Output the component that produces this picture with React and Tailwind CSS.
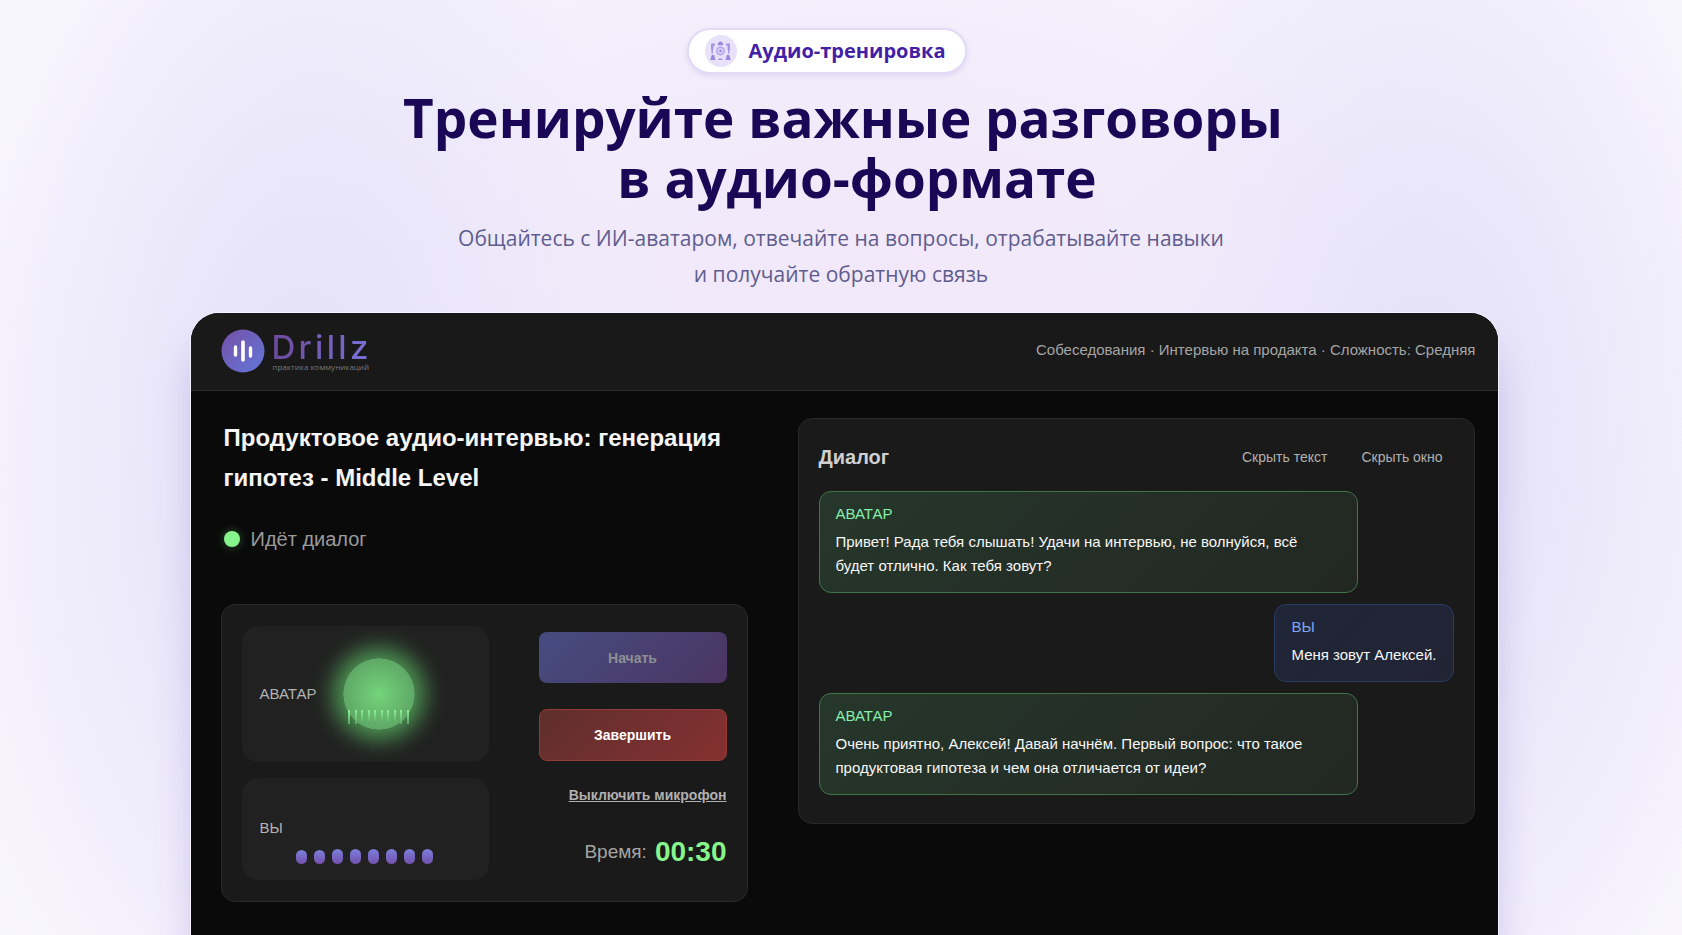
import React, { useState } from "react";

const initialMessages = [
    {
        id: 1,
        from: "avatar",
        text: "Привет! Рада тебя слышать! Удачи на интервью, не волнуйся, всё будет отлично. Как тебя зовут?",
    },
    { id: 2, from: "user", text: "Меня зовут Алексей." },
    {
        id: 3,
        from: "avatar",
        text: "Очень приятно, Алексей! Давай начнём. Первый вопрос: что такое продуктовая гипотеза и чем она отличается от идеи?",
    },
];

const micLevels = [14, 14, 15, 15, 15, 15, 15, 15];
const voiceTicks = [0, 1, 2, 3, 4, 5, 6, 7, 8, 9];

const BadgeIcon = () => (
    <svg viewBox="0 0 32 32" className="h-8 w-8 shrink-0" aria-hidden="true">
        <circle cx="16" cy="16" r="16" fill="#e8e1fa" />
        <circle cx="15.5" cy="16" r="3.8" fill="#d8cdf6" stroke="#b5a5ea" strokeWidth="1.5" />
        <g fill="none" stroke="#a693e6" strokeLinecap="round" strokeLinejoin="round">
            <path d="M9 9.6H7.2v4.6" strokeWidth="2.4" />
            <path d="M22 9.6h1.8v4.6" strokeWidth="2.4" />
            <path d="M7.2 15v3M23.8 15v3" strokeWidth="1.4" />
            <path d="M14 24.2h3" strokeWidth="1.4" />
        </g>
        <g fill="#9a87e0">
            <path d="M12.8 10.2c0-4.8 5.4-4.8 5.4 0z" />
            <path d="M5.4 25c0-1.8.8-2 .8-3.6a1.7 1.7 0 0 1 3.4 0c0 1.6.8 1.8.8 3.6z" />
            <path d="M20.6 25c0-1.8.8-2 .8-3.6a1.7 1.7 0 0 1 3.4 0c0 1.6.8 1.8.8 3.6z" />
            <circle cx="15.5" cy="16" r="1.2" />
        </g>
    </svg>
);

const Logo = () => (
    <a href="#home" className="flex items-center gap-[7px]">
        <svg viewBox="0 0 44 44" className="h-11 w-11" aria-hidden="true">
            <defs>
                <linearGradient id="logoFill" x1="0" y1="0" x2="1" y2="1">
                    <stop offset="0" stopColor="#7650a8" />
                    <stop offset="1" stopColor="#6277d8" />
                </linearGradient>
            </defs>
            <circle cx="22" cy="22" r="21.5" fill="url(#logoFill)" />
            <g stroke="#fff" strokeLinecap="round">
                <path d="M14.5 18v8" strokeWidth="3.4" />
                <path d="M22 13v18" strokeWidth="3.6" />
                <path d="M29.5 19v8" strokeWidth="3.4" />
            </g>
        </svg>
        <span className="flex flex-col">
            <span className="bg-gradient-to-r from-[#6c4a9c] to-[#7a72d8] bg-clip-text font-[Inter,sans-serif] text-[33px] leading-8 font-medium tracking-widest text-transparent">
                Drillz
            </span>
            <span className="pl-px font-['Open_Sans',sans-serif] text-[8px] leading-2 text-[#77777c]">практика коммуникаций</span>
        </span>
    </a>
);

const Message = ({ message }) => {
    const isAvatar = message.from === "avatar";
    return (
        <li
            className={
                isAvatar
                    ? "w-[85%] self-start rounded-xl border border-[#427548] bg-[linear-gradient(135deg,#26372b,#222722)] py-3 pr-8 pl-4"
                    : "self-end rounded-xl border border-[#283c64] bg-[linear-gradient(135deg,#1f2637,#222434)] px-4 py-3"
            }
        >
            <p className={isAvatar ? "text-[15px] leading-5 text-[#86efac]" : "text-[15px] leading-5 text-[#7da6f2]"}>
                {isAvatar ? "АВАТАР" : "ВЫ"}
            </p>
            <p className="mt-1.5 pb-0.5 text-[15px] leading-6 text-[#f7f7f7]">{message.text}</p>
        </li>
    );
};

const App = () => {
    const [showText, setShowText] = useState(true);
    const [showWindow, setShowWindow] = useState(true);
    const [micOn, setMicOn] = useState(true);

    return (
        <div className="flex min-h-screen flex-col overflow-hidden bg-[#f7f5fd] bg-[radial-gradient(ellipse_30%_30%_at_53%_28%,#f2e8f9_0%,#f2e8f900_100%),radial-gradient(ellipse_20%_70%_at_18%_46%,#e3e0f8_0%,#e3e0f800_100%),radial-gradient(ellipse_20%_70%_at_85%_46%,#e3e0f8_0%,#e3e0f800_100%),radial-gradient(ellipse_60%_90%_at_50%_60%,#efebfa_40%,#efebfa00_100%)] font-['Liberation_Sans',Arial,sans-serif]">
            {/* Hero */}
            <header className="flex flex-col items-center px-6 pt-7 text-center font-['Open_Sans',sans-serif]">
                <div className="mr-7 flex h-[46px] items-center gap-3 rounded-full border-2 border-[#e2dbf6] bg-white pr-5 pl-4 shadow-[0_2px_5px_rgba(120,90,200,0.15)]">
                    <BadgeIcon />
                    <span className="text-xl font-bold text-[#431fa5]">Аудио-тренировка</span>
                </div>
                <h1 className="mt-3.5 pl-1 text-[53px] leading-[60px] font-bold text-[#1a0756]">
                    <span className="block">Тренируйте важные разговоры</span>
                    <span className="block pl-7">в аудио-формате</span>
                </h1>
                <p className="mt-3 text-[21px] leading-9 text-[#5f5d8e]">
                    Общайтесь с ИИ-аватаром, отвечайте на вопросы, отрабатывайте навыки
                    <br />
                    и получайте обратную связь
                </p>
            </header>

            {/* Product window */}
            <div className="mt-5 flex grow flex-col pl-1.5">
                <div className="mx-auto h-px w-[42%] max-w-[546px] bg-[#5b4f86]" />
                <main className="mx-auto flex w-full max-w-[1307px] grow flex-col overflow-hidden rounded-t-[28px] bg-[#0a0a0a] shadow-[0_0_0_1px_#f3f0ff,0_36px_36px_rgba(90,70,190,0.22)]">
                    <div className="flex h-[78px] items-center justify-between border-b border-[#2c2c2c] bg-[#191919] pr-[22px] pb-0.5 pl-[30px]">
                        <Logo />
                        <p className="text-[15px] text-[#a5a5a5]">Собеседования · Интервью на продакта · Сложность: Средняя</p>
                    </div>

                    <div className="flex items-start gap-[50px] pt-[27px] pr-[23px] pb-8 pl-[30px]">
                        <section className="w-[527px] shrink-0">
                            <h2 className="pl-[3px] text-2xl leading-10 font-bold text-[#f5f5f5]">
                                Продуктовое аудио-интервью: генерация гипотез - Middle Level
                            </h2>
                            <div className="mt-[27px] flex items-center gap-[11px] pl-[3px]">
                                <span className="h-4 w-4 rounded-full bg-[#86f58c] shadow-[0_0_10px_rgba(110,230,120,0.35)]" />
                                <span className="text-xl text-[#9a9a9a]">Идёт диалог</span>
                            </div>

                            <div className="mt-[51px] flex justify-between rounded-[14px] border border-[#292929] bg-[#1a1a1a] px-5 py-[21px]">
                                <div className="flex w-[247px] flex-col gap-4">
                                    <div className="flex h-[136px] items-center rounded-2xl bg-[#212121] px-[18px]">
                                        <span className="text-[15px] text-[#b3b3b3]">АВАТАР</span>
                                        <div className="ml-[26px] flex h-[72px] w-[72px] items-end justify-center rounded-full bg-[radial-gradient(circle,#74d47b_0%,#5fa866_70%)] pb-1.5 shadow-[0_0_22px_10px_rgba(90,180,98,0.8)]">
                                            <div className="flex w-[61px] shrink-0 justify-between">
                                                {voiceTicks.map((tick) => (
                                                    <span key={tick} className="h-3.5 w-0.5 bg-gradient-to-b from-[#8cf294] to-[#5aa862]" />
                                                ))}
                                            </div>
                                        </div>
                                    </div>
                                    <div className="flex h-[102px] flex-col rounded-2xl bg-[#212121] px-[18px] pt-10">
                                        <span className="text-[15px] leading-5 text-[#b3b3b3]">ВЫ</span>
                                        <div className="mt-2.5 flex h-4 items-end gap-[7px] pl-9">
                                            {micLevels.map((level, i) => (
                                                <span
                                                    key={i}
                                                    className="w-[11px] rounded-full bg-gradient-to-b from-[#7a80dc] to-[#7350ac]"
                                                    style={{ height: level }}
                                                />
                                            ))}
                                        </div>
                                    </div>
                                </div>

                                <div className="flex w-[188px] flex-col items-end pt-1.5">
                                    <button
                                        type="button"
                                        disabled
                                        className="h-[51px] w-full rounded-lg bg-[linear-gradient(135deg,#464c80,#4b3562)] text-sm font-bold text-[#8f8f94]"
                                    >
                                        Начать
                                    </button>
                                    <button
                                        type="button"
                                        className="mt-[26px] h-[52px] w-full rounded-lg border border-[#953c36] bg-[linear-gradient(135deg,#5f2f2d,#853030)] text-sm font-bold text-white"
                                    >
                                        Завершить
                                    </button>
                                    <button
                                        type="button"
                                        onClick={() => setMicOn(!micOn)}
                                        className="mt-[22px] text-sm leading-6 font-bold whitespace-nowrap text-[#b0b0b0] underline"
                                    >
                                        {micOn ? "Выключить микрофон" : "Включить микрофон"}
                                    </button>
                                    <p className="mt-[27px] flex items-center gap-2 text-[19px] text-[#a5a5a5]">
                                        Время: <span className="text-[28px] leading-9 font-bold text-[#86f58c]">00:30</span>
                                    </p>
                                </div>
                            </div>
                        </section>

                        {showWindow && (
                            <section className="min-w-0 flex-1 rounded-[14px] border border-[#292929] bg-[#1a1a1a] px-5 pt-5 pb-7">
                                <div className="flex h-9 items-center justify-between">
                                    <h3 className="text-xl font-bold text-[#cfcfcf]">Диалог</h3>
                                    <div className="flex gap-[34px] pr-[11px] text-sm text-[#b0b0b0]">
                                        <button type="button" onClick={() => setShowText(!showText)}>
                                            Скрыть текст
                                        </button>
                                        <button type="button" onClick={() => setShowWindow(false)}>
                                            Скрыть окно
                                        </button>
                                    </div>
                                </div>
                                {showText && (
                                    <ul className="mt-4 flex flex-col gap-[11px]">
                                        {initialMessages.map((message) => (
                                            <Message key={message.id} message={message} />
                                        ))}
                                    </ul>
                                )}
                            </section>
                        )}
                    </div>
                </main>
            </div>
        </div>
    );
};

export default App;
